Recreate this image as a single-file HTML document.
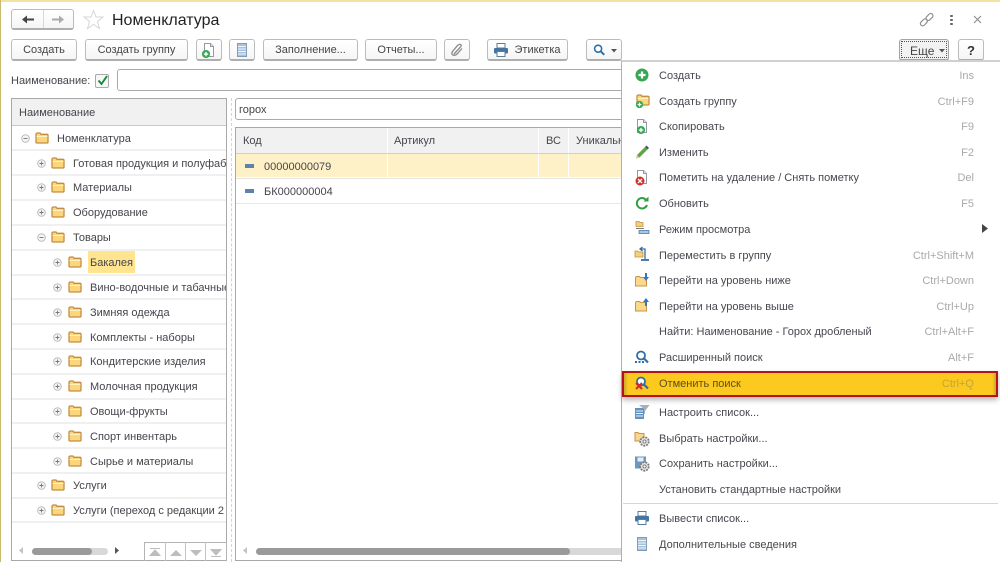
<!DOCTYPE html>
<html lang="ru"><head><meta charset="utf-8"><title>Номенклатура</title>
<style>
html,body{margin:0;padding:0;background:#fff}
#p{position:relative;width:1000px;height:562px;overflow:hidden;background:#fff;font-family:"Liberation Sans","Noto Sans CJK SC",sans-serif;font-size:11px;color:#45454d;filter:blur(.3px)}
#p div,#p span,#p svg{position:absolute}
.b{box-sizing:border-box;top:39px;height:22px;border:1px solid #bcbcbc;border-bottom:2px solid #aeaeae;border-radius:3px;background:linear-gradient(#fff,#f5f5f5);text-align:center;line-height:21px;color:#454545;font-size:11px;white-space:nowrap}
.t{white-space:nowrap;line-height:14px;transform:translateY(1px)}
.sep{left:12px;width:214px;height:2px;background:#f0f0f0}
.f{width:14px;height:12px}
.e{width:9px;height:9px}
.m{left:659px;white-space:nowrap;line-height:14px;color:#47474f;transform:translateY(1px)}
.s{right:26px;white-space:nowrap;line-height:14px;color:#a9a9a9;text-align:right;transform:translateY(1px)}
.i{left:634px;width:16px;height:16px}
</style></head><body><div id="p">
<svg width="0" height="0" style="left:0;top:0"><defs>
<symbol id="fo" viewBox="0 0 14 12"><path d="M1 2.500Q1 1 2.500 1H5L6 2.300H12Q13 2.300 13 3.500V10Q13 11 12 11H2Q1 11 1 10Z" fill="#fbd67a" stroke="#c48d45" stroke-width="1.300"/><path d="M1.500 4.500H12.500" stroke="#fff0c0" stroke-width="1"/></symbol>
<symbol id="pl" viewBox="0 0 9 9"><circle cx="4.500" cy="4.500" r="3.800" fill="#f4f4f4" stroke="#bcbcbc"/><path d="M2.500 4.500H6.500M4.500 2.500V6.500" stroke="#777" stroke-width=".9"/></symbol>
<symbol id="mi" viewBox="0 0 9 9"><circle cx="4.500" cy="4.500" r="3.800" fill="#f4f4f4" stroke="#bcbcbc"/><path d="M2.500 4.500H6.500" stroke="#777" stroke-width=".9"/></symbol>
<symbol id="doc" viewBox="0 0 16 16"><path d="M3.500 1.500H9.500L12.500 4.500V14.500H3.500Z" fill="#fff" stroke="#8f9aa5"/><path d="M9.500 1.500V4.500H12.500" fill="#dfe6ec" stroke="#8f9aa5"/></symbol>
<symbol id="gp" viewBox="0 0 16 16"><circle cx="8" cy="8" r="6.500" fill="#34a853"/><path d="M4.500 8H11.500M8 4.500V11.500" stroke="#fff" stroke-width="2.200"/></symbol>
<symbol id="lst" viewBox="0 0 16 16"><rect x="3.500" y="1.500" width="9" height="13" fill="#a9c2dc" stroke="#7f9dbb"/><path d="M4 4.500H12M4 7H12M4 9.500H12M4 12H12" stroke="#eef4fa" stroke-width="1"/></symbol>
<symbol id="lens" viewBox="0 0 16 16"><circle cx="7" cy="6.500" r="4" fill="#fff" stroke="#2f6ea5" stroke-width="1.800"/><path d="M10 9.500L14 13.500" stroke="#2f6ea5" stroke-width="2.200"/></symbol>
<symbol id="gear" viewBox="0 0 10 10"><circle cx="5" cy="5" r="3.300" fill="#e4e4e4" stroke="#777" stroke-width="1.300" stroke-dasharray="1.500 .8"/><circle cx="5" cy="5" r="1.200" fill="#fff" stroke="#777" stroke-width=".7"/></symbol>
<symbol id="prn" viewBox="0 0 16 16"><rect x="4" y="1.500" width="8" height="4.500" fill="#fff" stroke="#5a7d9e"/><rect x="1" y="6" width="14" height="5.500" rx="1" fill="#44749f"/><rect x="4" y="9.500" width="8" height="5" fill="#fff" stroke="#5a7d9e"/></symbol>
</defs></svg>

<!-- window frame -->
<div style="left:0;top:0;width:1000px;height:2px;background:#f3e3a0"></div>
<div style="left:0;top:0;width:1px;height:562px;background:#c9bb6c"></div>

<!-- nav -->
<div style="left:11px;top:9px;width:63px;height:21px;box-sizing:border-box;border:1px solid #bcbcbc;border-bottom:2px solid #aeaeae;border-radius:3px;background:linear-gradient(#fff,#f5f5f5)"></div>
<div style="left:43px;top:10px;width:1px;height:18px;background:#d8d8d8"></div>
<svg style="left:21px;top:14px" width="14" height="11" viewBox="0 0 14 11"><path d="M1 5.500L6 1.500V4.500H13V6.500H6V9.500Z" fill="#444"/></svg>
<svg style="left:51px;top:14px" width="14" height="11" viewBox="0 0 14 11"><path d="M13 5.500L8 1.500V4.500H1V6.500H8V9.500Z" fill="#aaa"/></svg>
<svg style="left:83px;top:9px" width="21" height="21" viewBox="0 0 21 21"><path d="M10.500 1.500L13 8H20L14.500 12.300L16.500 19.500L10.500 15.300L4.500 19.500L6.500 12.300L1 8H8Z" fill="#fff" stroke="#d6d6d6"/></svg>
<div class="t" style="left:112px;top:11px;font-size:16px;line-height:18px;color:#222">Номенклатура</div>
<svg style="left:919px;top:12px" width="15" height="15" viewBox="0 0 15 15"><g fill="none" stroke="#909090" stroke-width="1.200"><rect x="-4" y="-2" width="8" height="4.500" rx="2.200" transform="translate(4.700 10.200) rotate(-45)"/><rect x="-4" y="-2" width="8" height="4.500" rx="2.200" transform="translate(10.300 4.800) rotate(-45)"/></g></svg>
<svg style="left:949px;top:14px" width="5" height="12" viewBox="0 0 5 12"><path d="M1.200 1H3.800V3H1.200ZM1.200 5H3.800V7H1.200ZM1.200 9H3.800V11H1.200Z" fill="#666"/></svg>
<svg style="left:973px;top:15px" width="9" height="9" viewBox="0 0 9 9"><path d="M1 1L8 8M8 1L1 8" stroke="#888" stroke-width="1"/></svg>

<!-- toolbar -->
<div class="b" style="left:11px;width:66px">Создать</div>
<div class="b" style="left:85px;width:103px">Создать группу</div>
<div class="b" style="left:196px;width:26px"></div>
<svg style="left:201px;top:42px" width="16" height="16"><use href="#doc"/></svg>
<svg style="left:201px;top:49px" width="10" height="10" viewBox="0 0 16 16"><use href="#gp" width="16" height="16"/></svg>
<div class="b" style="left:229px;width:26px"></div>
<svg style="left:234px;top:42px" width="16" height="16"><use href="#lst"/></svg>
<div class="b" style="left:263px;width:95px">Заполнение...</div>
<div class="b" style="left:365px;width:72px">Отчеты...</div>
<div class="b" style="left:444px;width:26px"></div>
<svg style="left:449px;top:42px" width="16" height="16" viewBox="0 0 16 16"><path d="M5 12L11.500 5Q13 3 11.500 2.500Q10 2 8.500 3.500L3.500 9.500Q2 12 4 13Q6 14 8 12L13 6.500" fill="none" stroke="#8a8a8a" stroke-width="1.300"/></svg>
<div class="b" style="left:487px;width:81px;padding-left:20px">Этикетка</div>
<svg style="left:493px;top:42px" width="16" height="16"><use href="#prn"/></svg>
<div class="b" style="left:586px;width:36px"></div>
<svg style="left:592px;top:43px" width="14" height="14" viewBox="0 0 16 16"><use href="#lens" width="16" height="16"/></svg>
<svg style="left:611px;top:49px" width="6" height="4"><path d="M0 0H6L3 3.500Z" fill="#555"/></svg>
<div class="b" style="left:899px;width:50px;background:#f2f2f2;border-color:#a4a4a4"></div>
<div style="left:901px;top:41px;width:46px;height:17px;box-sizing:border-box;border:1px dotted #555"></div>
<div class="t" style="left:910px;top:43px;font-size:12px;color:#444">Еще</div>
<svg style="left:939px;top:49px" width="6" height="4"><path d="M0 0H6L3 3.500Z" fill="#555"/></svg>
<div class="b" style="left:958px;width:26px;font-weight:bold;font-size:13px;color:#333">?</div>

<!-- filter row -->
<div class="t" style="left:11px;top:73px">Наименование:</div>
<div style="left:95px;top:74px;width:14px;height:14px;box-sizing:border-box;border:1px solid #aaa;border-radius:2px;background:#f7f7f7"></div>
<svg style="left:96px;top:74px" width="13" height="13" viewBox="0 0 13 13"><path d="M2.500 6.500L5.500 10L11 2" fill="none" stroke="#16893a" stroke-width="1.900"/></svg>
<div style="left:117px;top:69px;width:510px;height:22px;box-sizing:border-box;border:1px solid #aaa;border-radius:3px"></div>

<!-- tree panel -->
<div style="left:11px;top:98px;width:216px;height:463px;box-sizing:border-box;border:1px solid #a8a8a8"></div>
<div style="left:12px;top:99px;width:214px;height:26px;background:#f1f1f1;border-bottom:1px solid #c8c8c8"></div>
<div class="t" style="left:19px;top:105px">Наименование</div>
<div style="left:231px;top:98px;width:0;height:464px;border-left:1px dashed #d4d4d4"></div>

<div class="sep" style="top:149px"></div><div class="sep" style="top:174px"></div><div class="sep" style="top:199px"></div><div class="sep" style="top:224px"></div><div class="sep" style="top:249px"></div><div class="sep" style="top:274px"></div><div class="sep" style="top:298px"></div><div class="sep" style="top:323px"></div><div class="sep" style="top:348px"></div><div class="sep" style="top:373px"></div><div class="sep" style="top:398px"></div><div class="sep" style="top:422px"></div><div class="sep" style="top:447px"></div><div class="sep" style="top:472px"></div><div class="sep" style="top:497px"></div><div class="sep" style="top:521px"></div>

<svg class="e" style="left:21px;top:134px"><use href="#mi"/></svg><svg class="f" style="left:35px;top:132px"><use href="#fo"/></svg><div class="t" style="left:57px;top:131px">Номенклатура</div>

<svg class="e" style="left:37px;top:159px"><use href="#pl"/></svg><svg class="f" style="left:51px;top:157px"><use href="#fo"/></svg><div class="t" style="left:73px;top:156px;width:153px;overflow:hidden">Готовая продукция и полуфабрикаты</div>
<svg class="e" style="left:37px;top:183px"><use href="#pl"/></svg><svg class="f" style="left:51px;top:181px"><use href="#fo"/></svg><div class="t" style="left:73px;top:180px">Материалы</div>
<svg class="e" style="left:37px;top:208px"><use href="#pl"/></svg><svg class="f" style="left:51px;top:206px"><use href="#fo"/></svg><div class="t" style="left:73px;top:205px">Оборудование</div>
<svg class="e" style="left:37px;top:233px"><use href="#mi"/></svg><svg class="f" style="left:51px;top:231px"><use href="#fo"/></svg><div class="t" style="left:73px;top:230px">Товары</div>

<div style="left:88px;top:251px;width:47px;height:22px;background:#ffe58f"></div>
<svg class="e" style="left:53px;top:258px"><use href="#pl"/></svg><svg class="f" style="left:68px;top:256px"><use href="#fo"/></svg><div class="t" style="left:90px;top:255px">Бакалея</div>
<svg class="e" style="left:53px;top:283px"><use href="#pl"/></svg><svg class="f" style="left:68px;top:281px"><use href="#fo"/></svg><div class="t" style="left:90px;top:280px;width:136px;overflow:hidden">Вино-водочные и табачные изделия</div>
<svg class="e" style="left:53px;top:308px"><use href="#pl"/></svg><svg class="f" style="left:68px;top:306px"><use href="#fo"/></svg><div class="t" style="left:90px;top:305px">Зимняя одежда</div>
<svg class="e" style="left:53px;top:333px"><use href="#pl"/></svg><svg class="f" style="left:68px;top:331px"><use href="#fo"/></svg><div class="t" style="left:90px;top:330px">Комплекты - наборы</div>
<svg class="e" style="left:53px;top:357px"><use href="#pl"/></svg><svg class="f" style="left:68px;top:355px"><use href="#fo"/></svg><div class="t" style="left:90px;top:354px">Кондитерские изделия</div>
<svg class="e" style="left:53px;top:382px"><use href="#pl"/></svg><svg class="f" style="left:68px;top:380px"><use href="#fo"/></svg><div class="t" style="left:90px;top:379px">Молочная продукция</div>
<svg class="e" style="left:53px;top:407px"><use href="#pl"/></svg><svg class="f" style="left:68px;top:405px"><use href="#fo"/></svg><div class="t" style="left:90px;top:404px">Овощи-фрукты</div>
<svg class="e" style="left:53px;top:432px"><use href="#pl"/></svg><svg class="f" style="left:68px;top:430px"><use href="#fo"/></svg><div class="t" style="left:90px;top:429px">Спорт инвентарь</div>
<svg class="e" style="left:53px;top:457px"><use href="#pl"/></svg><svg class="f" style="left:68px;top:455px"><use href="#fo"/></svg><div class="t" style="left:90px;top:454px">Сырье и материалы</div>
<svg class="e" style="left:37px;top:481px"><use href="#pl"/></svg><svg class="f" style="left:51px;top:479px"><use href="#fo"/></svg><div class="t" style="left:73px;top:478px">Услуги</div>
<svg class="e" style="left:37px;top:506px"><use href="#pl"/></svg><svg class="f" style="left:51px;top:504px"><use href="#fo"/></svg><div class="t" style="left:73px;top:503px;width:152px;overflow:hidden">Услуги (переход с редакции 2.5)</div>

<!-- tree bottom -->
<svg style="left:19px;top:547px" width="5" height="7"><path d="M4 0V7L0 3.500Z" fill="#c4c4c4"/></svg>
<div style="left:32px;top:548px;width:76px;height:7px;border-radius:4px;background:#d8d8d8"></div>
<div style="left:32px;top:548px;width:60px;height:7px;border-radius:4px;background:#9a9a9a"></div>
<svg style="left:115px;top:547px" width="5" height="7"><path d="M0 0V7L4 3.500Z" fill="#555"/></svg>
<div style="left:144px;top:542px;width:83px;height:19px;box-sizing:border-box;border:1px solid #b4b4b4;border-bottom:0"></div>
<div style="left:165px;top:542px;width:1px;height:19px;background:#c4c4c4"></div>
<div style="left:185px;top:542px;width:1px;height:19px;background:#c4c4c4"></div>
<div style="left:205px;top:542px;width:1px;height:19px;background:#c4c4c4"></div>
<svg style="left:149px;top:548px" width="12" height="9"><path d="M1 .5H11M6 2L11 7.500H1Z" fill="#bdbdbd" stroke="#bdbdbd"/></svg>
<svg style="left:170px;top:550px" width="12" height="7"><path d="M6 0L12 6H0Z" fill="#bdbdbd"/></svg>
<svg style="left:190px;top:550px" width="12" height="7"><path d="M6 6L12 0H0Z" fill="#bdbdbd"/></svg>
<svg style="left:210px;top:548px" width="12" height="9"><path d="M1 8.500H11M6 7L11 1.500H1Z" fill="#bdbdbd" stroke="#bdbdbd"/></svg>

<!-- right panel -->
<div style="left:235px;top:98px;width:392px;height:22px;box-sizing:border-box;border:1px solid #aaa;border-radius:3px"></div>
<div class="t" style="left:239px;top:102px;color:#444">горох</div>
<div style="left:235px;top:127px;width:392px;height:434px;box-sizing:border-box;border:1px solid #a8a8a8"></div>
<div style="left:236px;top:128px;width:386px;height:25px;background:#f1f1f1;border-bottom:1px solid #d0d0d0"></div>
<div style="left:387px;top:128px;width:1px;height:25px;background:#fff"></div>
<div style="left:538px;top:128px;width:1px;height:25px;background:#fff"></div>
<div style="left:568px;top:128px;width:1px;height:25px;background:#fff"></div>
<div class="t" style="left:243px;top:133px">Код</div>
<div class="t" style="left:394px;top:133px">Артикул</div>
<div class="t" style="left:546px;top:133px">ВС</div>
<div class="t" style="left:576px;top:133px;width:46px;overflow:hidden">Уникальный</div>
<div style="left:236px;top:154px;width:386px;height:23px;background:#fff1c7"></div>
<div style="left:387px;top:154px;width:1px;height:23px;background:#fff"></div>
<div style="left:538px;top:154px;width:1px;height:23px;background:#fff"></div>
<div style="left:568px;top:154px;width:1px;height:23px;background:#fff"></div>
<div style="left:236px;top:178px;width:386px;height:1px;background:#e4e4e4"></div>
<div style="left:236px;top:203px;width:386px;height:1px;background:#e8e8e8"></div>
<div style="left:245px;top:164px;width:9px;height:4px;background:#5c82ad"></div>
<div style="left:245px;top:189px;width:9px;height:4px;background:#5c82ad"></div>
<div class="t" style="left:264px;top:159px">00000000079</div>
<div class="t" style="left:264px;top:184px">БК000000004</div>
<svg style="left:243px;top:547px" width="5" height="7"><path d="M4 0V7L0 3.500Z" fill="#c4c4c4"/></svg>
<div style="left:256px;top:548px;width:366px;height:7px;background:#d8d8d8;border-radius:4px 0 0 4px"></div>
<div style="left:256px;top:548px;width:314px;height:7px;border-radius:4px;background:#9a9a9a"></div>

<!-- dropdown menu -->
<div style="left:621px;top:60px;width:379px;height:502px;box-sizing:border-box;background:#fff;border:1px solid #b0b0b0;border-right:0;border-bottom:0;border-top:2px solid #d0d0d0"></div>

<svg class="i" style="top:67px"><use href="#gp"/></svg>
<div class="m" style="top:68px">Создать</div><div class="s" style="top:68px">Ins</div>

<svg class="f" style="left:636px;top:94px;width:14px;height:12px"><use href="#fo"/></svg>
<svg style="left:635px;top:100px" width="9" height="9" viewBox="0 0 16 16"><use href="#gp" width="16" height="16"/></svg>
<div class="m" style="top:94px">Создать группу</div><div class="s" style="top:94px">Ctrl+F9</div>

<svg class="i" style="top:118px"><use href="#doc"/></svg>
<svg style="left:636px;top:125px" width="10" height="10" viewBox="0 0 16 16"><use href="#gp" width="16" height="16"/></svg>
<div class="m" style="top:119px">Скопировать</div><div class="s" style="top:119px">F9</div>

<svg class="i" style="top:144px" viewBox="0 0 16 16"><path d="M3 11L11 3L13.500 5.500L5.500 13.500L2 14.500Z" fill="#5ea543"/><path d="M11 3L12.500 1.500L15 4L13.500 5.500Z" fill="#44566a"/><path d="M3 11L5.500 13.500L2 14.500Z" fill="#e8c596"/></svg>
<div class="m" style="top:145px">Изменить</div><div class="s" style="top:145px">F2</div>

<svg class="i" style="top:169px"><use href="#doc"/></svg>
<svg style="left:635px;top:176px" width="10" height="10" viewBox="0 0 10 10"><circle cx="5" cy="5" r="4.500" fill="#d3322c"/><path d="M3 3L7 7M7 3L3 7" stroke="#fff" stroke-width="1.300"/></svg>
<div class="m" style="top:170px">Пометить на удаление / Снять пометку</div><div class="s" style="top:170px">Del</div>

<svg class="i" style="top:195px" viewBox="0 0 16 16"><path d="M12.500 5.500A5.200 5.200 0 1 0 13 10" fill="none" stroke="#2ea043" stroke-width="2"/><path d="M9.500 6.500H14.500V1.500Z" fill="#2ea043"/></svg>
<div class="m" style="top:196px">Обновить</div><div class="s" style="top:196px">F5</div>

<svg class="i" style="top:220px" viewBox="0 0 16 16"><path d="M2 1.500H5L6 2.500H9V6.500H2Z" fill="#f3cf7a" stroke="#bd9243" stroke-width=".8"/><path d="M2 8.500H10" stroke="#777" stroke-width="1"/><rect x="5" y="10.500" width="10" height="3" fill="#a9c7e4" stroke="#4c7ba8" stroke-width=".8"/></svg>
<div class="m" style="top:222px">Режим просмотра</div>
<svg style="left:982px;top:224px" width="6" height="9"><path d="M0 0L6 4.500L0 9Z" fill="#444"/></svg>

<svg class="i" style="top:246px" viewBox="0 0 16 16"><path d="M1 5H4L5 6H9V11H1Z" fill="#f3cf7a" stroke="#bd9243" stroke-width=".8"/><path d="M11 13V3H6.500M8.500 1L6 3L8.500 5" fill="none" stroke="#3c6c9c" stroke-width="1.300"/><path d="M7 14H15" stroke="#3c6c9c" stroke-width="1.800"/></svg>
<div class="m" style="top:248px">Переместить в группу</div><div class="s" style="top:248px">Ctrl+Shift+M</div>

<svg class="i" style="top:272px" viewBox="0 0 16 16"><path d="M1.500 6Q1.500 4.500 3 4.500H5.500L6.500 5.500H12.500V14H1.500Z" fill="#fbd98a" stroke="#c8934a"/><path d="M12 1V6" stroke="#2f78c4" stroke-width="2"/><path d="M9 5H15L12 9Z" fill="#2f78c4"/></svg>
<div class="m" style="top:273px">Перейти на уровень ниже</div><div class="s" style="top:273px">Ctrl+Down</div>

<svg class="i" style="top:297px" viewBox="0 0 16 16"><path d="M1.500 6Q1.500 4.500 3 4.500H5.500L6.500 5.500H12.500V14H1.500Z" fill="#fbd98a" stroke="#c8934a"/><path d="M12 9V4" stroke="#2f78c4" stroke-width="2"/><path d="M9 5H15L12 1Z" fill="#2f78c4"/></svg>
<div class="m" style="top:299px">Перейти на уровень выше</div><div class="s" style="top:299px">Ctrl+Up</div>

<div class="m" style="top:324px">Найти: Наименование - Горох дробленый</div><div class="s" style="top:324px">Ctrl+Alt+F</div>

<svg class="i" style="top:349px"><use href="#lens"/></svg>
<svg style="left:635px;top:361px" width="9" height="3"><path d="M0 0H2V2H0ZM3.500 0H5.500V2H3.500ZM7 0H9V2H7Z" fill="#2f6ea5"/></svg>
<div class="m" style="top:350px">Расширенный поиск</div><div class="s" style="top:350px">Alt+F</div>

<!-- highlight -->
<div style="left:622px;top:371px;width:376px;height:26px;box-sizing:border-box;border:2px solid #b5121b;background:linear-gradient(90deg,#c9a82a,#fcc91f 4px,#fcc91f 99%,#c9a82a);box-shadow:0 3px 5px rgba(100,100,90,.45)"></div>
<svg class="i" style="top:375px"><use href="#lens"/></svg>
<svg style="left:635px;top:382px" width="8" height="8" viewBox="0 0 8 8"><path d="M1 1L7 7M7 1L1 7" stroke="#d8262c" stroke-width="2"/></svg>
<div class="m" style="top:376px;color:#5a4f1c">Отменить поиск</div><div class="s" style="top:376px;color:#c2a53a">Ctrl+Q</div>

<svg class="i" style="top:404px" viewBox="0 0 16 16"><rect x="1" y="4" width="9" height="11" fill="#5f93c4"/><path d="M2 7H9M2 9.500H9M2 12H9" stroke="#e6f0f8"/><path d="M5 1H15.500L11 7V10H10V5Z" fill="#a7b0b8"/></svg>
<div class="m" style="top:405px">Настроить список...</div>

<svg class="i" style="top:430px" viewBox="0 0 16 16"><path d="M1 2.500H4L5 3.500H10V11H1Z" fill="#f7d78a" stroke="#c8934a"/></svg>
<svg style="left:638px;top:435px" width="13" height="13"><use href="#gear"/></svg>
<div class="m" style="top:431px">Выбрать настройки...</div>

<svg class="i" style="top:455px" viewBox="0 0 16 16"><rect x="1" y="1.500" width="11" height="12" fill="#6d97c0"/><rect x="3.500" y="2.500" width="6" height="4" fill="#e7eef5"/></svg>
<svg style="left:638px;top:460px" width="13" height="13"><use href="#gear"/></svg>
<div class="m" style="top:456px">Сохранить настройки...</div>

<div class="m" style="top:482px">Установить стандартные настройки</div>
<div style="left:623px;top:503px;width:375px;height:1px;background:#ddd6c8"></div>

<svg class="i" style="top:510px"><use href="#prn"/></svg>
<div class="m" style="top:511px">Вывести список...</div>

<svg class="i" style="top:536px"><use href="#lst"/></svg>
<div class="m" style="top:537px">Дополнительные сведения</div>
</div></body></html>
